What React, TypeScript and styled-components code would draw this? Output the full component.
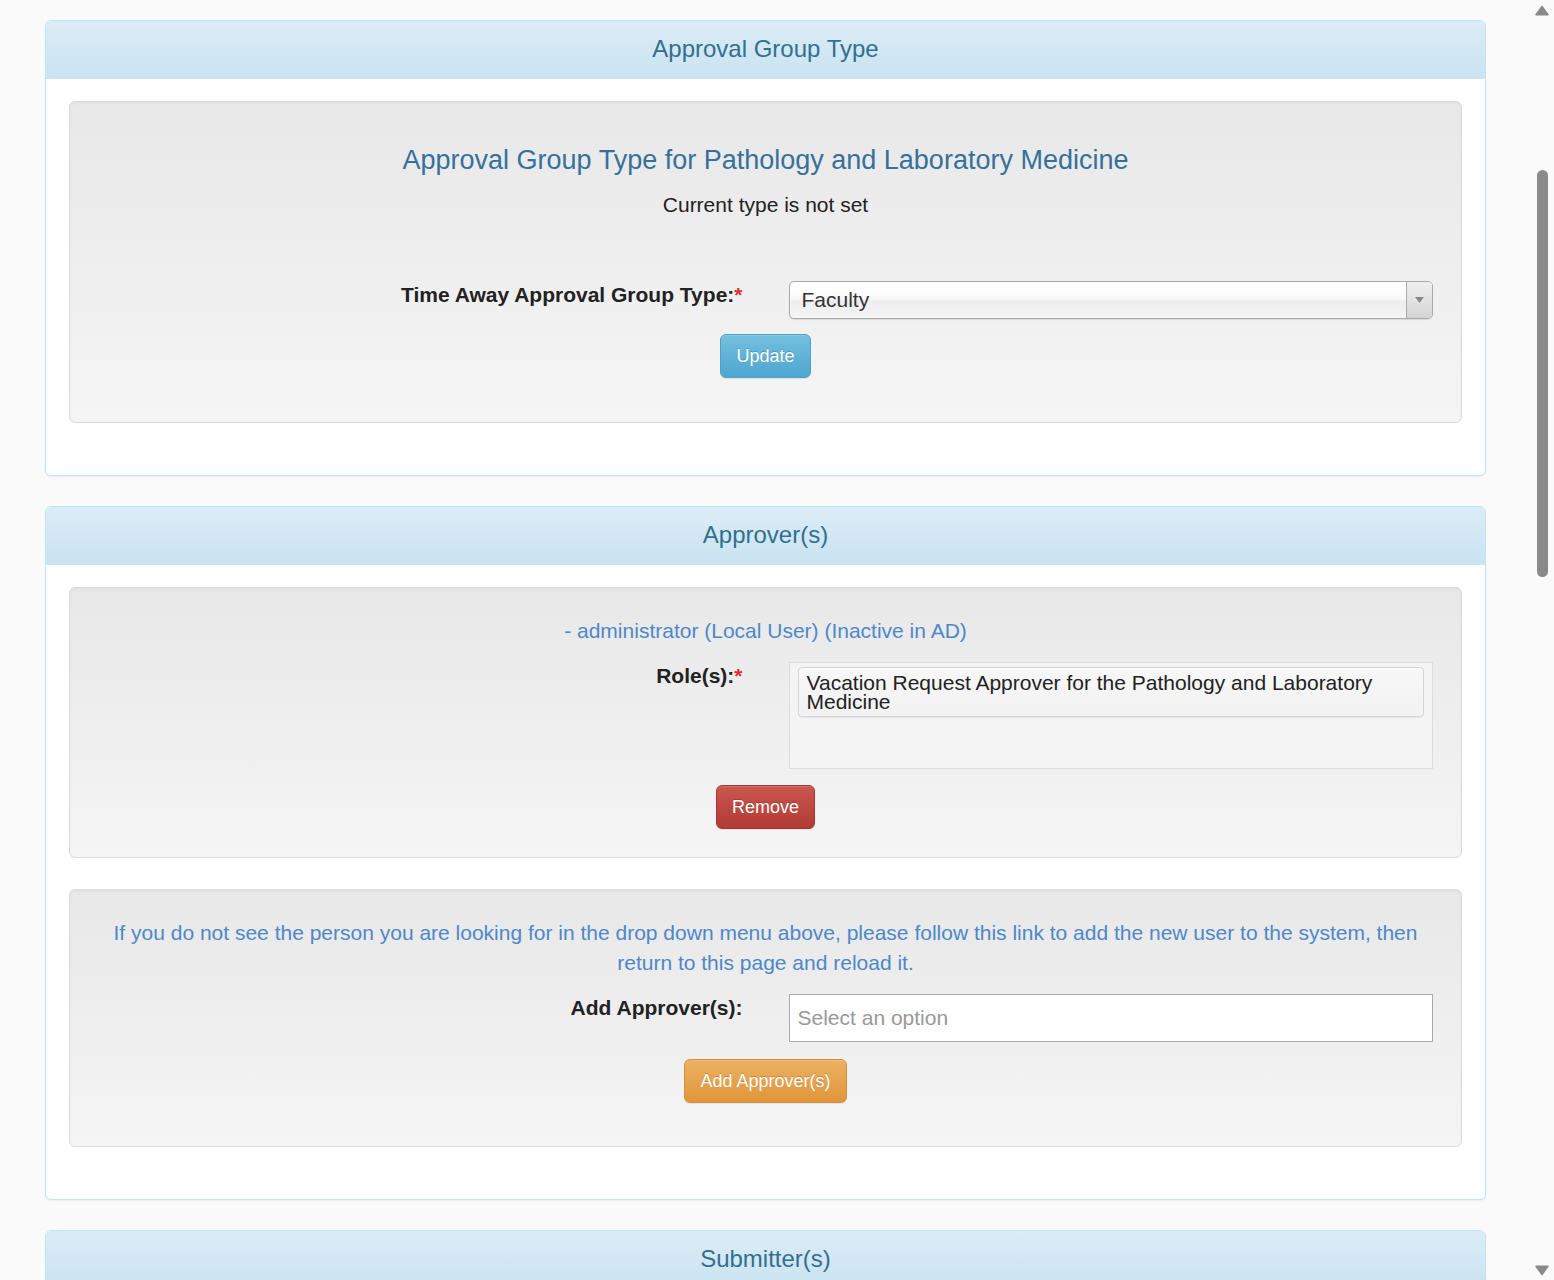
import styled, { createGlobalStyle, css } from "styled-components";

const GlobalStyle = createGlobalStyle`
  * { box-sizing: border-box; }
  html, body {
    margin: 0;
    padding: 0;
    height: 100%;
    overflow: hidden;
    background: #fafafa;
  }
  body {
    font-family: "Liberation Sans", Arial, Helvetica, sans-serif;
    font-size: 21px;
    line-height: 30px;
    color: #333;
  }
`;

type Variant = "info" | "danger" | "warning";

const BUTTON_COLORS: Record<Variant, { top: string; bottom: string; border: string }> = {
  info: { top: "#74c0e0", bottom: "#4ea6cf", border: "#4aa1ca" },
  danger: { top: "#cb5650", bottom: "#b13b34", border: "#a6352f" },
  warning: { top: "#ecb163", bottom: "#e0963a", border: "#d68f35" },
};

function ArrowGlyph({ up }: { up?: boolean }) {
  return (
    <svg width="15" height="11" viewBox="0 0 15 11">
      <path
        d={up ? "M7.5 1 L14 10 L1 10 Z" : "M1 1 L14 1 L7.5 10 Z"}
        fill="#8a8a8a"
        stroke="#8a8a8a"
        strokeWidth="1.5"
        strokeLinejoin="round"
      />
    </svg>
  );
}

function App() {
  return (
    <Layout>
      <GlobalStyle />
      <Main>
        <Panel>
          <PanelHeading>Approval Group Type</PanelHeading>
          <PanelBody>
            <Well>
              <WellTitle>Approval Group Type for Pathology and Laboratory Medicine</WellTitle>
              <Lead $after={60}>Current type is not set</Lead>
              <FormRow>
                <Label>
                  Time Away Approval Group Type:<Required>*</Required>
                </Label>
                <ChosenSingle>
                  <ChosenValue>Faculty</ChosenValue>
                  <ChosenArrow>
                    <svg width="9" height="6" viewBox="0 0 9 6">
                      <path d="M0 0 L9 0 L4.5 6 Z" fill="#888" />
                    </svg>
                  </ChosenArrow>
                </ChosenSingle>
              </FormRow>
              <Actions $after={16}>
                <Button $variant="info">Update</Button>
              </Actions>
            </Well>
          </PanelBody>
        </Panel>

        <Panel>
          <PanelHeading>Approver(s)</PanelHeading>
          <PanelBody>
            <Well>
              <Notice>- administrator (Local User) (Inactive in AD)</Notice>
              <FormRow>
                <Label>
                  Role(s):<Required>*</Required>
                </Label>
                <RoleBox>
                  <RoleTag>
                    Vacation Request Approver for the Pathology and Laboratory Medicine
                  </RoleTag>
                </RoleBox>
              </FormRow>
              <Actions $before={16} $after={0}>
                <Button $variant="danger">Remove</Button>
              </Actions>
            </Well>

            <Well>
              <Notice>
                If you do not see the person you are looking for in the drop down menu above,
                please follow this link to add the new user to the system, then return to this
                page and reload it.
              </Notice>
              <FormRow>
                <Label>Add Approver(s):</Label>
                <PlainSelect>
                  <Placeholder>Select an option</Placeholder>
                </PlainSelect>
              </FormRow>
              <Actions $before={17} $after={15}>
                <Button $variant="warning">Add Approver(s)</Button>
              </Actions>
            </Well>
          </PanelBody>
        </Panel>

        <Panel>
          <PanelHeading>Submitter(s)</PanelHeading>
          <PanelBody>
            <Well>
              <Notice>- administrator (Local User) (Inactive in AD)</Notice>
            </Well>
          </PanelBody>
        </Panel>
      </Main>

      <ScrollBar>
        <ScrollButton>
          <ArrowGlyph up />
        </ScrollButton>
        <ScrollTrack>
          <ScrollThumb />
        </ScrollTrack>
        <ScrollButton>
          <ArrowGlyph />
        </ScrollButton>
      </ScrollBar>
    </Layout>
  );
}

const Layout = styled.div`
  display: flex;
  height: 100vh;
  background: #fafafa;
`;

const Main = styled.main`
  flex: 1;
  height: 100vh;
  overflow: hidden;
  padding: 20px 48px 0 45px;
`;

const Panel = styled.section`
  background: #fff;
  border: 1px solid #bce8f1;
  border-radius: 6px;
  margin-bottom: 30px;
  box-shadow: 0 1px 2px rgba(0, 0, 0, 0.05);
`;

const PanelHeading = styled.h2`
  margin: 0;
  padding: 13px 22px 14px;
  font-size: 24px;
  line-height: 30px;
  font-weight: normal;
  text-align: center;
  color: #31708f;
  background: linear-gradient(to bottom, #dcecf6 0%, #c9e3f1 100%);
  border-bottom: 1px solid #c8e4f0;
  border-radius: 5px 5px 0 0;
`;

const PanelBody = styled.div`
  padding: 22px 23px 21px;
`;

const Well = styled.div`
  padding: 28px;
  margin-bottom: 31px;
  border: 1px solid #dcdcdc;
  border-radius: 6px;
  background: linear-gradient(to bottom, #e8e8e8 0%, #f5f5f5 100%);
  box-shadow: inset 0 1px 3px rgba(0, 0, 0, 0.05), 0 1px 0 rgba(255, 255, 255, 0.1);
`;

const WellTitle = styled.h3`
  margin: 15px 0;
  font-size: 27px;
  line-height: 30px;
  font-weight: normal;
  text-align: center;
  color: #36719b;
`;

const Lead = styled.p<{ $after: number }>`
  margin: 0 0 ${(p) => p.$after}px;
  text-align: center;
  color: #222;
`;

const Notice = styled.p`
  margin: 0 0 15px;
  text-align: center;
  color: #4d88c9;
`;

const FormRow = styled.div`
  display: grid;
  grid-template-columns: 1fr 1fr;
  column-gap: 46px;
  align-items: start;
`;

const Label = styled.label`
  text-align: right;
  font-weight: bold;
  color: #222;
`;

const Required = styled.span`
  color: #e52b2b;
`;

const controlBase = css`
  margin-top: 1px;
  border: 1px solid #aaa;
  color: #333;
`;

const ChosenSingle = styled.div`
  ${controlBase};
  display: flex;
  height: 38px;
  border-radius: 5px;
  overflow: hidden;
  background: linear-gradient(#fff 20%, #f6f6f6 50%, #eee 52%, #f4f4f4 100%);
  box-shadow: 0 0 3px #fff inset, 0 1px 1px rgba(0, 0, 0, 0.1);
`;

const ChosenValue = styled.span`
  flex: 1;
  padding-left: 12px;
  line-height: 36px;
`;

const ChosenArrow = styled.span`
  display: flex;
  align-items: center;
  justify-content: center;
  width: 26px;
  border-left: 1px solid #aaa;
  background: linear-gradient(#f0f0f0, #d4d4d4);
`;

const RoleBox = styled.div`
  margin-top: 1px;
  height: 107px;
  padding: 4px 8px;
  border: 1px solid #dcdcdc;
  background: #f4f4f4;
`;

const RoleTag = styled.div`
  padding: 5px 30px 5px 8px;
  line-height: 19px;
  color: #222;
  border: 1px solid #d4d4d4;
  border-radius: 4px;
  background: linear-gradient(#f8f8f8, #f1f1f1);
  box-shadow: 0 0 2px #fff inset, 0 1px 0 rgba(0, 0, 0, 0.05);
`;

const PlainSelect = styled.div`
  ${controlBase};
  height: 48px;
  padding: 0 8px;
  background: #fff;
  line-height: 46px;
`;

const Placeholder = styled.span`
  color: #999;
`;

const Actions = styled.div<{ $after: number; $before?: number }>`
  display: flex;
  justify-content: center;
  margin-top: ${(p) => p.$before ?? 15}px;
  margin-bottom: ${(p) => p.$after}px;
`;

const Button = styled.button<{ $variant: Variant }>`
  font-family: inherit;
  font-size: 18px;
  line-height: 26px;
  padding: 8px 15px;
  border-radius: 6px;
  color: #fff;
  cursor: pointer;
  text-shadow: 0 -1px 0 rgba(0, 0, 0, 0.2);
  box-shadow: inset 0 1px 0 rgba(255, 255, 255, 0.15), 0 1px 1px rgba(0, 0, 0, 0.075);
  ${({ $variant }) => {
    const c = BUTTON_COLORS[$variant];
    return css`
      background: linear-gradient(to bottom, ${c.top} 0%, ${c.bottom} 100%);
      border: 1px solid ${c.border};
    `;
  }}
`;

const ScrollBar = styled.div`
  width: 20px;
  height: 100vh;
  display: flex;
  flex-direction: column;
  padding-right: 5px;
  background: #fafafa;
`;

const ScrollButton = styled.div`
  height: 20px;
  display: flex;
  align-items: center;
  justify-content: center;
  padding-left: 1px;
`;

const ScrollTrack = styled.div`
  flex: 1;
  display: flex;
  justify-content: center;
  padding-left: 1px;
`;

const ScrollThumb = styled.div`
  width: 11px;
  height: 407px;
  margin-top: 150px;
  border-radius: 6px;
  background: #8a8a8a;
`;

export default App;
